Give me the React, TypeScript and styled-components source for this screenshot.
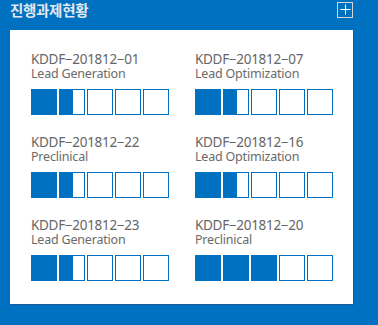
import React from "react";
import styled, { createGlobalStyle } from "styled-components";

const GlobalStyle = createGlobalStyle`
  html, body {
    margin: 0;
    padding: 0;
    background: #0070c0;
  }
  body {
    font-family: "Noto Sans", "Noto Sans CJK KR", sans-serif;
  }
`;

const Panel = styled.section`
  width: 378px;
  height: 325px;
  background: #0070c0;
  box-sizing: border-box;
  padding: 0 25px 0 10px;
`;

const Header = styled.div`
  display: flex;
  align-items: center;
  justify-content: space-between;
  height: 20px;
  margin-bottom: 10px;
`;

const Title = styled.h2`
  margin: 0;
  font-family: "Noto Sans CJK KR", sans-serif;
  font-size: 14.5px;
  font-weight: 700;
  color: #e2e8ef;
  letter-spacing: -0.3px;
  line-height: 18px;
`;

const MoreButton = styled.button`
  width: 16px;
  height: 16px;
  padding: 0;
  margin-top: -1px;
  border: 1px solid #d6d6d6;
  background: transparent;
  display: flex;
  align-items: center;
  justify-content: center;
  cursor: pointer;
`;

const Card = styled.div`
  background: #fff;
  height: 274px;
  box-shadow: 1px 1px 0 #1b5a96;
  box-sizing: border-box;
  padding: 22px 0 0 21px;
  display: grid;
  grid-template-columns: 164px 164px;
  grid-auto-rows: 63px;
  row-gap: 20px;
`;

const Item = styled.div`
  display: flex;
  flex-direction: column;
`;

const Code = styled.div`
  font-size: 13.5px;
  line-height: 15px;
  color: #666;
  letter-spacing: -0.3px;
`;

const Phase = styled.div`
  font-size: 12.5px;
  line-height: 14px;
  color: #6a6a6a;
  letter-spacing: -0.2px;
`;

const Steps = styled.div`
  display: flex;
  gap: 2px;
  margin-top: 8px;
`;

const Step = styled.div<{ $fill: number }>`
  width: 26px;
  height: 26px;
  box-sizing: border-box;
  border: 1px solid #0070c0;
  background: linear-gradient(
    to right,
    #0070c0 ${(p) => p.$fill * 100}%,
    #fff ${(p) => p.$fill * 100}%
  );
`;

const projects = [
  { code: "KDDF−201812−01", phase: "Lead Generation", progress: 1.5 },
  { code: "KDDF−201812−07", phase: "Lead Optimization", progress: 1.5 },
  { code: "KDDF−201812−22", phase: "Preclinical", progress: 1.5 },
  { code: "KDDF−201812−16", phase: "Lead Optimization", progress: 1.5 },
  { code: "KDDF−201812−23", phase: "Lead Generation", progress: 1.5 },
  { code: "KDDF−201812−20", phase: "Preclinical", progress: 3 },
];

// a half step is drawn a little past the middle, as in the original
const stepFill = (progress: number, i: number) => {
  const f = Math.max(0, Math.min(1, progress - i));
  return f === 0.5 ? 0.55 : f;
};

export default function App() {
  return (
    <>
      <GlobalStyle />
      <Panel>
        <Header>
          <Title>진행과제현황</Title>
          <MoreButton aria-label="더보기">
            <svg width="11" height="11" viewBox="0 0 11 11">
              <path d="M5.5 0.5v10M0.5 5.5h10" stroke="#fff" strokeWidth="1" />
            </svg>
          </MoreButton>
        </Header>
        <Card>
          {projects.map((p) => (
            <Item key={p.code}>
              <Code>{p.code}</Code>
              <Phase>{p.phase}</Phase>
              <Steps>
                {[0, 1, 2, 3, 4].map((i) => (
                  <Step key={i} $fill={stepFill(p.progress, i)} />
                ))}
              </Steps>
            </Item>
          ))}
        </Card>
      </Panel>
    </>
  );
}
